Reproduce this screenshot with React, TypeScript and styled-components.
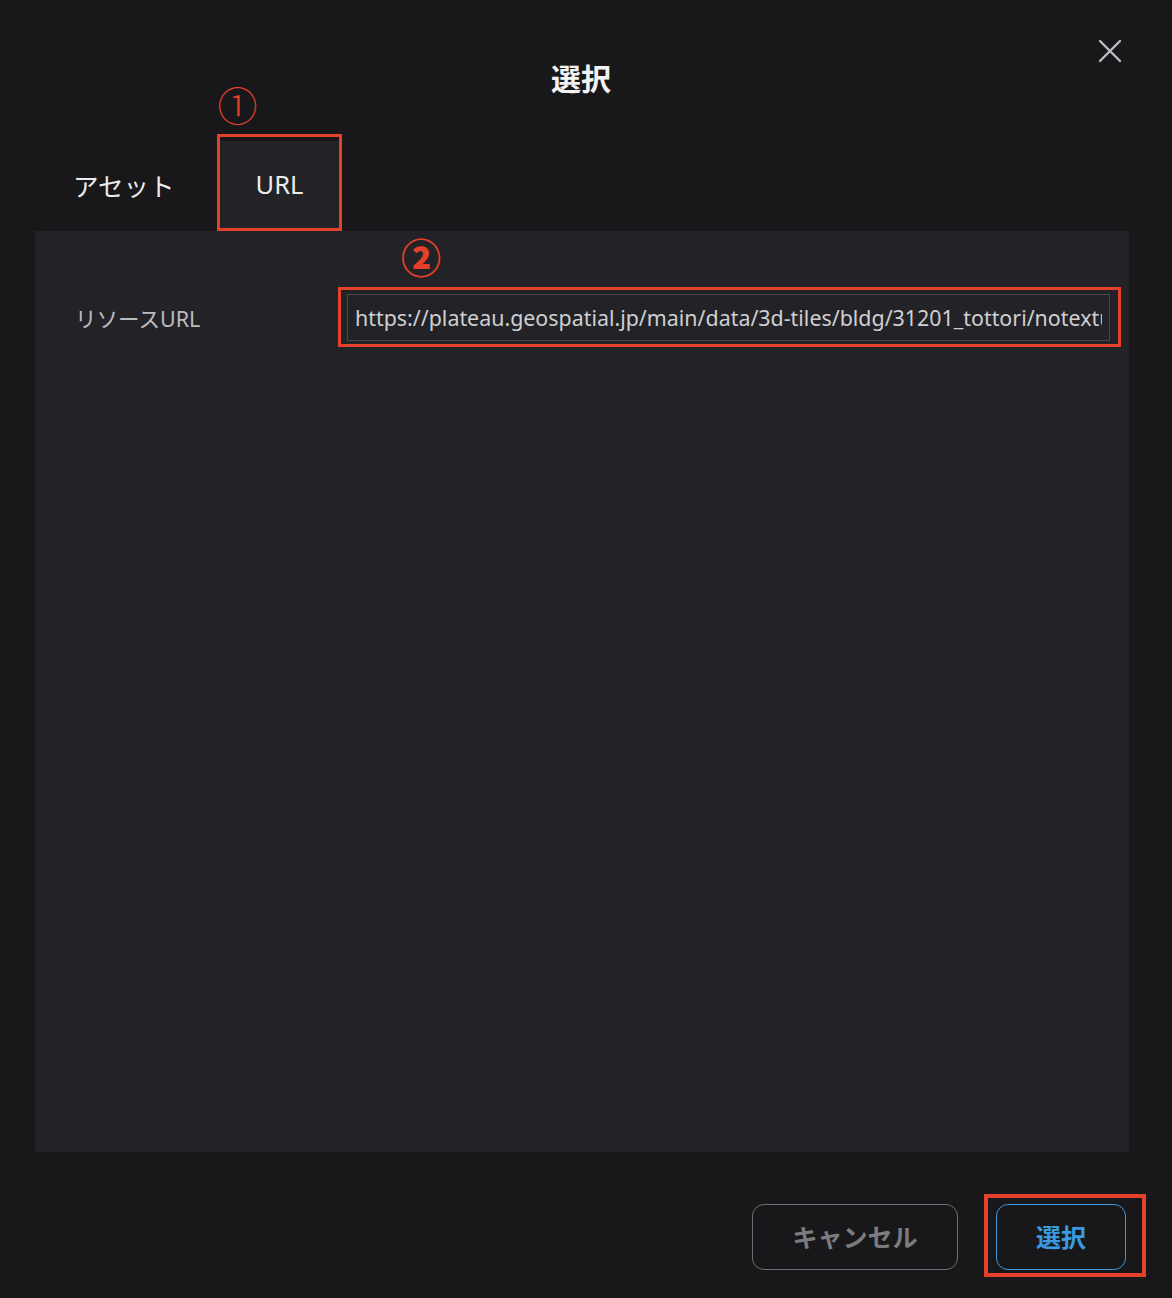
import React from "react";
import styled, { createGlobalStyle } from "styled-components";

const Global = createGlobalStyle`
  html, body { margin: 0; padding: 0; background: #18181b; }
  * { box-sizing: border-box; }
`;

const FONT = `"Noto Sans", "Noto Sans CJK JP", sans-serif`;
const RED = "#e5402a";

const Modal = styled.div`
  width: 1172px;
  height: 1298px;
  background: #18181b;
  font-family: ${FONT};
  display: flex;
  flex-direction: column;
  overflow: hidden;
`;

const Header = styled.header`
  height: 141px;
  display: grid;
  grid-template-columns: 1fr auto 1fr;
  align-items: start;
  padding: 0 50px 0 40px;
`;

const Title = styled.h1`
  grid-column: 2;
  margin: 58px 0 0;
  font-size: 30px;
  line-height: 42px;
  font-weight: 700;
  color: #f2f2f2;
`;

const CloseButton = styled.button`
  grid-column: 3;
  justify-self: end;
  margin-top: 39px;
  width: 24px;
  height: 24px;
  padding: 0;
  border: none;
  background: transparent;
  display: flex;
  cursor: pointer;
`;

const Tabs = styled.div`
  height: 90px;
  display: flex;
  gap: 9px;
  padding-left: 37px;
`;

const Tab = styled.div<{ $active?: boolean }>`
  position: relative;
  display: flex;
  align-items: center;
  padding: 0 36px 4px;
  font-size: 25.5px;
  color: #ececec;
  background: ${(p) => (p.$active ? "#232327" : "transparent")};
`;

const AnnotBox = styled.span<{ $t: number; $r: number; $b: number; $l: number; $w: number }>`
  position: absolute;
  top: ${(p) => p.$t}px;
  right: ${(p) => p.$r}px;
  bottom: ${(p) => p.$b}px;
  left: ${(p) => p.$l}px;
  border: ${(p) => p.$w}px solid ${RED};
  pointer-events: none;
`;

const AnnotNum = styled.span<{ $t: number; $l: number; $bold?: boolean }>`
  position: absolute;
  top: ${(p) => p.$t}px;
  left: ${(p) => p.$l}px;
  font-family: "Noto Sans CJK JP", sans-serif;
  font-size: 40px;
  line-height: 40px;
  font-weight: ${(p) => (p.$bold ? 900 : 300)};
  color: ${RED};
`;

const Panel = styled.section`
  height: 921px;
  margin: 0 43px 0 35px;
  background: #232327;
  padding: 63px 19px 0 40px;
`;

const Row = styled.div`
  display: grid;
  grid-template-columns: 272px 1fr;
  align-items: center;
`;

const Label = styled.label`
  font-size: 21.5px;
  color: #bcbcbf;
`;

const InputWrap = styled.div`
  position: relative;
`;

const Input = styled.input`
  display: block;
  width: 100%;
  height: 47px;
  padding: 0 7px;
  border: 1px solid #48484d;
  background: #232327;
  color: #cfcfd2;
  font-family: ${FONT};
  font-size: 21.4px;
  outline: none;
`;

const Footer = styled.footer`
  display: flex;
  justify-content: flex-end;
  gap: 38px;
  padding: 52px 46px 28px 0;
`;

const Button = styled.button<{ $primary?: boolean }>`
  position: relative;
  height: 66px;
  width: ${(p) => (p.$primary ? 130 : 206)}px;
  border-radius: 12px;
  border: 1px solid ${(p) => (p.$primary ? "#3b9ae1" : "#707074")};
  background: transparent;
  color: ${(p) => (p.$primary ? "#3b9ae1" : "#7c7c80")};
  font-family: ${FONT};
  font-size: 25px;
  font-weight: 700;
  padding: 0 0 2px;
  cursor: pointer;
`;

const URL_VALUE =
  "https://plateau.geospatial.jp/main/data/3d-tiles/bldg/31201_tottori/notexture/tileset.json";

export default function App() {
  return (
    <>
      <Global />
      <Modal>
        <Header>
          <Title>選択</Title>
          <CloseButton aria-label="close">
            <svg width="24" height="24" viewBox="0 0 24 24">
              <path d="M2 2 L22 22 M22 2 L2 22" stroke="#bdbdc0" strokeWidth="2.4" strokeLinecap="round" />
            </svg>
          </CloseButton>
        </Header>
        <Tabs>
          <Tab>アセット</Tab>
          <Tab $active>
            URL
            <AnnotBox $t={-7} $r={-3} $b={0} $l={-3} $w={3} />
            <AnnotNum $t={-57} $l={-2}>①</AnnotNum>
          </Tab>
        </Tabs>
        <Panel>
          <Row>
            <Label>リソースURL</Label>
            <InputWrap>
              <Input readOnly value={URL_VALUE} />
              <AnnotBox $t={-7} $r={-11} $b={-6} $l={-9} $w={3} />
              <AnnotNum $t={-58} $l={54} $bold>②</AnnotNum>
            </InputWrap>
          </Row>
        </Panel>
        <Footer>
          <Button>キャンセル</Button>
          <Button $primary>
            選択
            <AnnotBox $t={-11} $r={-21} $b={-8} $l={-13} $w={4} />
          </Button>
        </Footer>
      </Modal>
    </>
  );
}
